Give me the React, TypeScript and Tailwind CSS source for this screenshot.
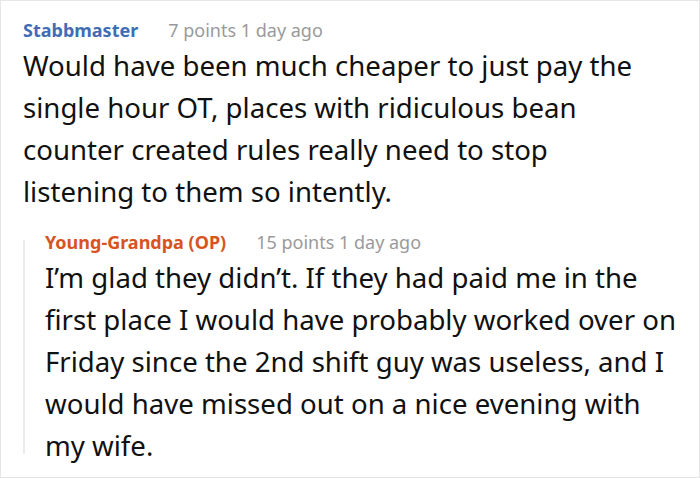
const font = { fontFamily: '"Noto Sans", "Open Sans", sans-serif' };

function Meta({ name, points, color }: { name: string; points: string; color: string }) {
  return (
    <div className="flex items-baseline gap-[30px] text-[18px] leading-[28px]">
      <span className={`font-bold ${color}`}>{name}</span>
      <span className="text-[#9a9a9a]">{points} 1 day ago</span>
    </div>
  );
}

export default function App() {
  return (
    <div style={font} className="w-[700px] h-[478px] bg-white border border-[#e6e6e6] overflow-hidden">
      <div className="pl-[22px] pt-[15px] pr-[12px]">
        <Meta name="Stabbmaster" points="7 points" color="text-[#3f6db5]" />
        <p className="text-[27.6px] leading-[42px] text-[#111] max-w-[640px]">
          Would have been much cheaper to just pay the single hour OT, places with ridiculous bean counter
          created rules really need to stop listening to them so intently.
        </p>
        <div className="flex mt-[16px]">
          <div className="w-[2px] bg-[#ececec] my-[12px] shrink-0" />
          <div className="pl-[20px]">
            <Meta name="Young-Grandpa (OP)" points="15 points" color="text-[#d9531e]" />
            <p className="text-[27.6px] leading-[42px] text-[#111]">
              I’m glad they didn’t. If they had paid me in the first place I would have probably worked over on
              Friday since the 2nd shift guy was useless, and I would have missed out on a nice evening with my
              wife.
            </p>
          </div>
        </div>
      </div>
    </div>
  );
}
